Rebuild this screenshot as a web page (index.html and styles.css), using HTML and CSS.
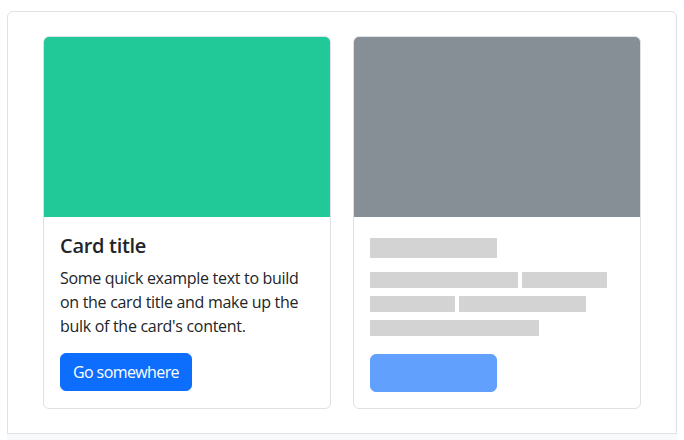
FILE: index.html
```html
<!DOCTYPE html>
<html lang="en">
<head>
<meta charset="utf-8">
<title>Placeholders</title>
<link rel="stylesheet" href="styles.css">
</head>
<body>
<div class="page">
  <div class="example">
    <div class="card">
      <div class="card-img green"></div>
      <div class="card-body">
        <h5 class="card-title">Card title</h5>
        <p class="card-text">Some quick example text to build on the card title and make up the bulk of the card's content.</p>
        <a href="#" class="btn">Go somewhere</a>
      </div>
    </div>
    <div class="card">
      <div class="card-img gray"></div>
      <div class="card-body">
        <h5 class="card-title"><span class="ph col-6"></span></h5>
        <p class="card-text ph-text"><span class="ph col-7"></span> <span class="ph col-4"></span> <span class="ph col-4"></span> <span class="ph col-6"></span> <span class="ph col-8"></span></p>
        <span class="btn btn-ph col-6"></span>
      </div>
    </div>
  </div>
  <div class="below"></div>
</div>
</body>
</html>
```
FILE: styles.css
```css
* { box-sizing: border-box; }
html, body { margin: 0; background: #fff; }
body {
  font-family: "Open Sans", "Noto Sans", sans-serif;
  font-size: 16px;
  line-height: 1.5;
  color: #212529;
  letter-spacing: -0.3px;
}
.page { padding: 11px 7px 0 7px; }
.example {
  border: 1px solid #dee2e6;
  border-radius: 6px 6px 0 0;
  padding: 24px;
  display: flex;
  justify-content: space-around;
  height: 423px;
}
.below { height: 10px; background: #f8f9fa; }
.card {
  width: 288px;
  border: 1px solid #dee2e6;
  border-radius: 6px;
  display: flex;
  flex-direction: column;
  background: #fff;
}
.card-img { height: 180px; border-radius: 5px 5px 0 0; }
.green { background: #20c997; }
.gray { background: #868e96; }
.card-body { padding: 17px 16px 16px; flex: 1; }
.card-title {
  margin: 0 0 8px;
  font-size: 20px;
  font-weight: 600;
  line-height: 1.2;
}
.card-text { margin: 0 0 15px; }
.ph-text { margin-bottom: 16px; }
.btn {
  display: inline-block;
  padding: 6px 12px;
  font-size: 16px;
  line-height: 24px;
  letter-spacing: -0.6px;
  color: #fff;
  background: #0d6efd;
  border: 1px solid #0d6efd;
  border-radius: 6px;
  text-decoration: none;
  vertical-align: middle;
}
.ph {
  display: inline-block;
  min-height: 1em;
  vertical-align: middle;
  background: #d3d3d3;
}
.btn-ph { opacity: .65; height: 38px; min-height: 38px; }
.col-4 { width: 33.3333%; }
.col-6 { width: 50%; }
.col-7 { width: 58.3333%; }
.col-8 { width: 66.6667%; }
```
